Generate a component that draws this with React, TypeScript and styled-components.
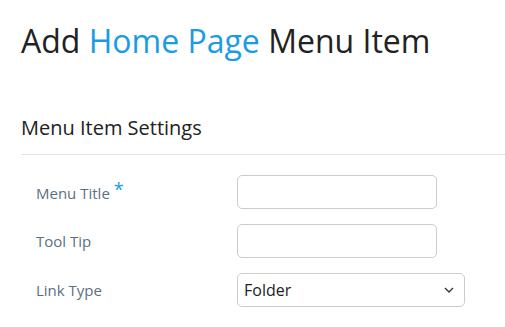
import styled, { createGlobalStyle } from "styled-components";

const GlobalStyle = createGlobalStyle`
  body {
    margin: 0;
    background: #fff;
    font-family: "Open Sans", "Liberation Sans", sans-serif;
  }
`;

export default function App() {
  return (
    <>
      <GlobalStyle />
      <Page>
        <Title>
          Add <Highlight>Home Page</Highlight> Menu Item
        </Title>
        <Section>
          <SectionTitle>Menu Item Settings</SectionTitle>
          <Form>
            <Row>
              <Label>
                Menu Title<Required>*</Required>
              </Label>
              <TextInput type="text" />
            </Row>
            <Row>
              <Label>Tool Tip</Label>
              <TextInput type="text" />
            </Row>
            <Row>
              <Label>Link Type</Label>
              <SelectBox>
                <span>Folder</span>
                <svg width="10" height="6" viewBox="0 0 10 6">
                  <path d="M1 1l4 4 4-4" fill="none" stroke="#333" strokeWidth="1.3" />
                </svg>
              </SelectBox>
            </Row>
          </Form>
        </Section>
      </Page>
    </>
  );
}

const Page = styled.div`
  padding: 0 0 0 21px;
`;

const Title = styled.h1`
  margin: 0;
  padding-top: 19px;
  font-size: 32px;
  font-weight: 400;
  line-height: 44px;
  color: #222;
`;

const Highlight = styled.span`
  color: #1a9be3;
`;

const Section = styled.div`
  margin-top: 51px;
`;

const SectionTitle = styled.h2`
  margin: 0;
  font-size: 20px;
  font-weight: 400;
  line-height: 27px;
  color: #222;
  padding-bottom: 13px;
  border-bottom: 1px solid #e3e3e3;
`;

const Form = styled.div`
  display: flex;
  flex-direction: column;
  gap: 15px;
  padding: 20px 0 0 15px;
`;

const Row = styled.div`
  display: flex;
  align-items: center;
  height: 34px;
`;

const Label = styled.label`
  width: 201px;
  font-size: 15px;
  color: #5a7080;
`;

const Required = styled.span`
  color: #1a9be3;
  font-size: 18px;
  margin-left: 4px;
  position: relative;
  top: -3px;
`;

const TextInput = styled.input`
  box-sizing: border-box;
  width: 200px;
  height: 34px;
  border: 1px solid #ccc;
  border-radius: 5px;
  outline: none;
`;

const SelectBox = styled.div`
  box-sizing: border-box;
  width: 228px;
  height: 34px;
  border: 1px solid #ccc;
  border-radius: 5px;
  display: flex;
  align-items: center;
  justify-content: space-between;
  padding: 0 10px 0 6px;
  font-size: 16px;
  color: #222;
`;
